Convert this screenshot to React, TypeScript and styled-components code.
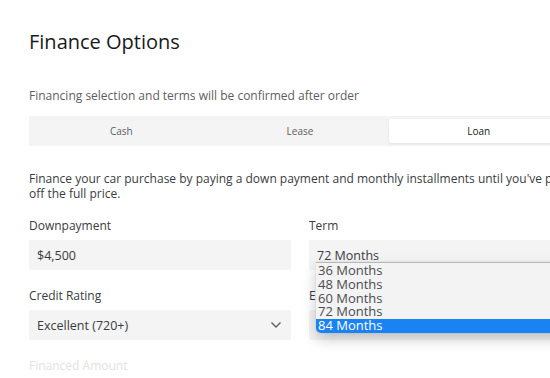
import React from "react";
import styled, { createGlobalStyle } from "styled-components";

const GlobalStyle = createGlobalStyle`
  html, body {
    margin: 0;
    padding: 0;
    background: #ffffff;
    overflow: hidden;
  }
  body {
    font-family: "Open Sans", "Liberation Sans", sans-serif;
    color: #393c41;
  }
`;

const tabs = ["Cash", "Lease", "Loan"];
const terms = ["36 Months", "48 Months", "60 Months", "72 Months", "84 Months"];

const App: React.FC = () => {
  return (
    <>
      <GlobalStyle />
      <Page>
        <Title>Finance Options</Title>
        <Subtitle>Financing selection and terms will be confirmed after order</Subtitle>
        <Tabs>
          {tabs.map((t) => (
            <Tab key={t} $active={t === "Loan"}>
              {t}
            </Tab>
          ))}
        </Tabs>
        <Desc>
          Finance your car purchase by paying a down payment and monthly
          installments until you've paid off the full price.
        </Desc>
        <Form>
          <Field>
            <Label>Downpayment</Label>
            <Control>$4,500</Control>
          </Field>
          <Field>
            <Label>Term</Label>
            <Control>72 Months</Control>
            <Menu>
              {terms.map((t) => (
                <MenuItem key={t} $selected={t === "84 Months"}>
                  {t}
                </MenuItem>
              ))}
            </Menu>
          </Field>
          <Field>
            <Label>Credit Rating</Label>
            <Control>
              Excellent (720+)
              <Chevron width="12" height="8" viewBox="0 0 12 8">
                <polyline
                  points="1.5,1.5 6,6 10.5,1.5"
                  fill="none"
                  stroke="#5c5e62"
                  strokeWidth="1.4"
                />
              </Chevron>
            </Control>
          </Field>
          <Field>
            <Label>Estimated APR</Label>
            <Control>4.99%</Control>
          </Field>
          <Field>
            <Label $faded>Financed Amount</Label>
          </Field>
        </Form>
      </Page>
    </>
  );
};

export default App;

const Page = styled.div`
  width: 542px;
  padding: 30px 0 0 29px;
`;

const Title = styled.h1`
  margin: 0;
  font-size: 20px;
  line-height: 24px;
  font-weight: 500;
  color: #171a20;
`;

const Subtitle = styled.p`
  margin: 34px 0 0;
  font-size: 12px;
  line-height: 16px;
  color: #5c5e62;
`;

const Tabs = styled.div`
  margin-top: 12px;
  height: 30px;
  box-sizing: border-box;
  padding: 3px;
  background: #f4f4f4;
  display: grid;
  grid-template-columns: repeat(3, 1fr);
`;

const Tab = styled.div<{ $active?: boolean }>`
  display: flex;
  align-items: center;
  justify-content: center;
  font-size: 10px;
  color: ${({ $active }) => ($active ? "#171a20" : "#5c5e62")};
  background: ${({ $active }) => ($active ? "#ffffff" : "transparent")};
  box-shadow: ${({ $active }) =>
    $active ? "0 1px 3px rgba(0, 0, 0, 0.08)" : "none"};
  border-radius: 2px;
`;

const Desc = styled.p`
  margin: 25px 0 0;
  font-size: 12px;
  line-height: 15px;
  color: #393c41;
`;

const Form = styled.div`
  margin-top: 17px;
  display: grid;
  grid-template-columns: 262px 262px;
  column-gap: 18px;
  row-gap: 18px;
`;

const Field = styled.div`
  position: relative;
  display: flex;
  flex-direction: column;
  gap: 6px;
`;

const Label = styled.div<{ $faded?: boolean }>`
  font-size: 12px;
  line-height: 16px;
  color: ${({ $faded }) => ($faded ? "#e2e2e2" : "#393c41")};
`;

const Control = styled.div`
  height: 30px;
  box-sizing: border-box;
  padding: 0 9px 0 8px;
  background: #f4f4f4;
  border-radius: 2px;
  display: flex;
  align-items: center;
  justify-content: space-between;
  font-size: 12.5px;
  color: #393c41;
`;

const Chevron = styled.svg`
  display: block;
`;

const Menu = styled.div`
  position: absolute;
  z-index: 10;
  top: 44px;
  left: 7px;
  width: 300px;
  box-sizing: border-box;
  padding-top: 1px;
  background: #f3f3f3;
  border-top: 1px solid #b9b9b9;
  border-radius: 0 0 5px 5px;
  box-shadow: 0 6px 14px rgba(0, 0, 0, 0.22), 0 0 1px rgba(0, 0, 0, 0.3);
  overflow: hidden;
`;

const MenuItem = styled.div<{ $selected?: boolean }>`
  height: 13.8px;
  line-height: 13.8px;
  padding-left: 2px;
  font-size: 13px;
  color: ${({ $selected }) => ($selected ? "#ffffff" : "#4a4c50")};
  background: ${({ $selected }) => ($selected ? "#1b82f4" : "transparent")};
`;
